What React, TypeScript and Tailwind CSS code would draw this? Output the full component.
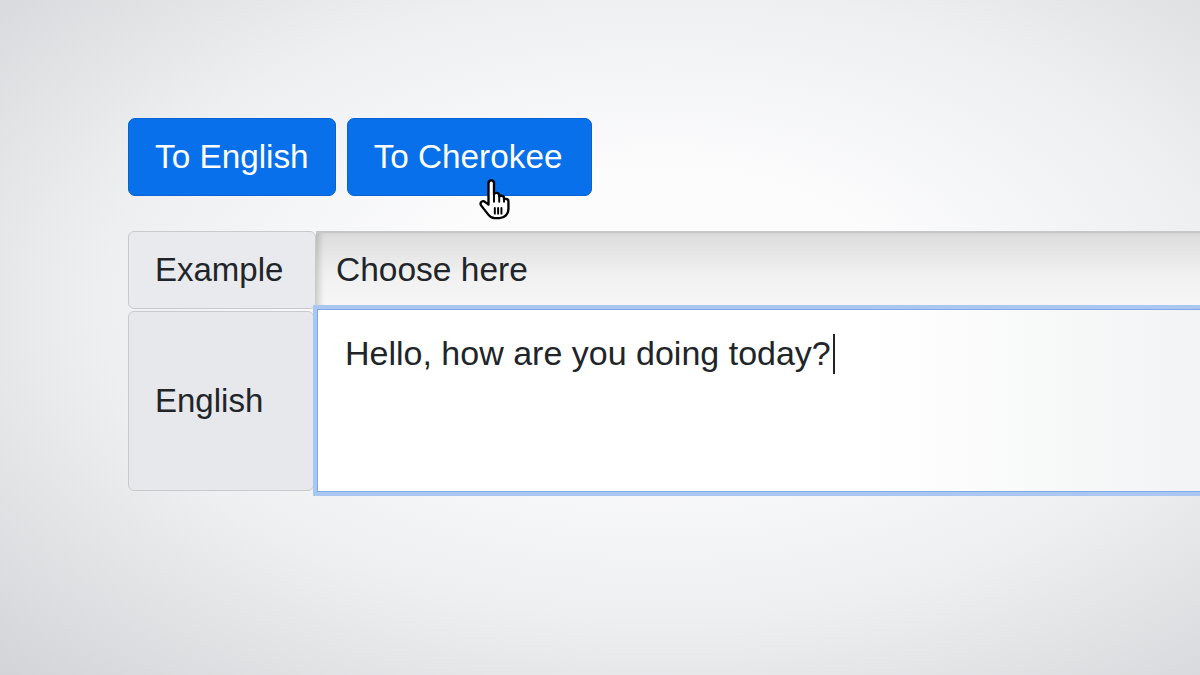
import React from "react";

const HandCursor: React.FC = () => (
  <svg width="40" height="44" viewBox="0 0 28 32" className="absolute left-[474px] top-[179px]">
    <path
      d="M10 3c0-1.1.9-2 2-2s2 .9 2 2v8.2c.3-.7 1-1.1 1.8-1.1 1.1 0 2 .9 2 2v.6c.4-.4.9-.6 1.5-.6 1.1 0 2 .9 2 2v.7c.4-.3.8-.4 1.3-.4 1.1 0 1.9.9 1.9 2v5.4c0 3.7-2.7 6.6-6.5 6.6h-3.6c-2 0-3.3-.9-4.4-2.3l-5.4-6.9c-.7-.9-.5-2.1.4-2.7.8-.6 1.9-.4 2.6.3L10 18.6z"
      fill="#fff"
      stroke="#000"
      strokeWidth="1.7"
      strokeLinejoin="round"
    />
    <path d="M14 11.2v5.3M17.8 12.1v4.4M21.3 13.4v3.1" stroke="#000" strokeWidth="1.4" strokeLinecap="round" />
    <path d="M14.6 21v4.2M17 21v4.2M19.4 21v4.2" stroke="#000" strokeWidth="1.4" strokeLinecap="round" />
  </svg>
);

const App: React.FC = () => {
  return (
    <div
      className="relative w-[1200px] h-[675px] overflow-hidden bg-[radial-gradient(ellipse_at_55%_45%,#fcfcfd_25%,#eeeff1_60%,#d2d4d7_100%)] text-[#212529]"
      style={{ fontFamily: '"Liberation Sans", Arial, sans-serif' }}
    >
      <div className="pl-[128px] pt-[118px] w-[1240px]">
        {/* buttons */}
        <div className="flex gap-[11px]">
          <button className="h-[78px] px-[26px] rounded-[7px] bg-[#0770ea] border border-[#0a62cf] text-white text-[33.3px]">
            To English
          </button>
          <button className="h-[78px] pl-[26px] pr-[29px] rounded-[7px] bg-[#0770ea] border border-[#0a62cf] text-white text-[33.3px]">
            To Cherokee
          </button>
        </div>

        {/* form */}
        <div className="mt-[35px]">
          <div className="flex">
            <div className="w-[188px] h-[78px] flex items-center pl-[26px] bg-[#e9eaed] border border-[#c8cacd] rounded-[6px] text-[33px]">
              Example
            </div>
            <div className="flex-1 h-[76px] flex items-center pl-[20px] border-t-2 border-[#c6c7c9] bg-[linear-gradient(to_bottom,#dcdcdd,#f0f0f1_55%,#f7f7f8)] shadow-[inset_6px_0_6px_-3px_rgba(0,0,0,0.18)] text-[33.5px]">
              Choose here
            </div>
          </div>
          <div className="flex items-start mt-[-4px]">
            <div className="w-[186px] h-[180px] mt-[6px] flex items-center pl-[26px] bg-[#e7e8eb] border border-[#c8cacd] rounded-[6px] text-[33px]">
              English
            </div>
            <div className="flex-1 h-[191px] -ml-px border-[4px] border-[#a9c7f1] bg-[linear-gradient(to_right,#ffffff_60%,#f1f2f3)] shadow-[inset_0_0_0_1px_#7fa9e6]">
              <div className="pl-[28px] pt-[19px] text-[34px] flex items-center">
                Hello, how are you doing today?
                <span className="inline-block w-[2px] h-[40px] bg-[#222] ml-[2px]" />
              </div>
            </div>
          </div>
        </div>
      </div>
      <HandCursor />
    </div>
  );
};

export default App;
